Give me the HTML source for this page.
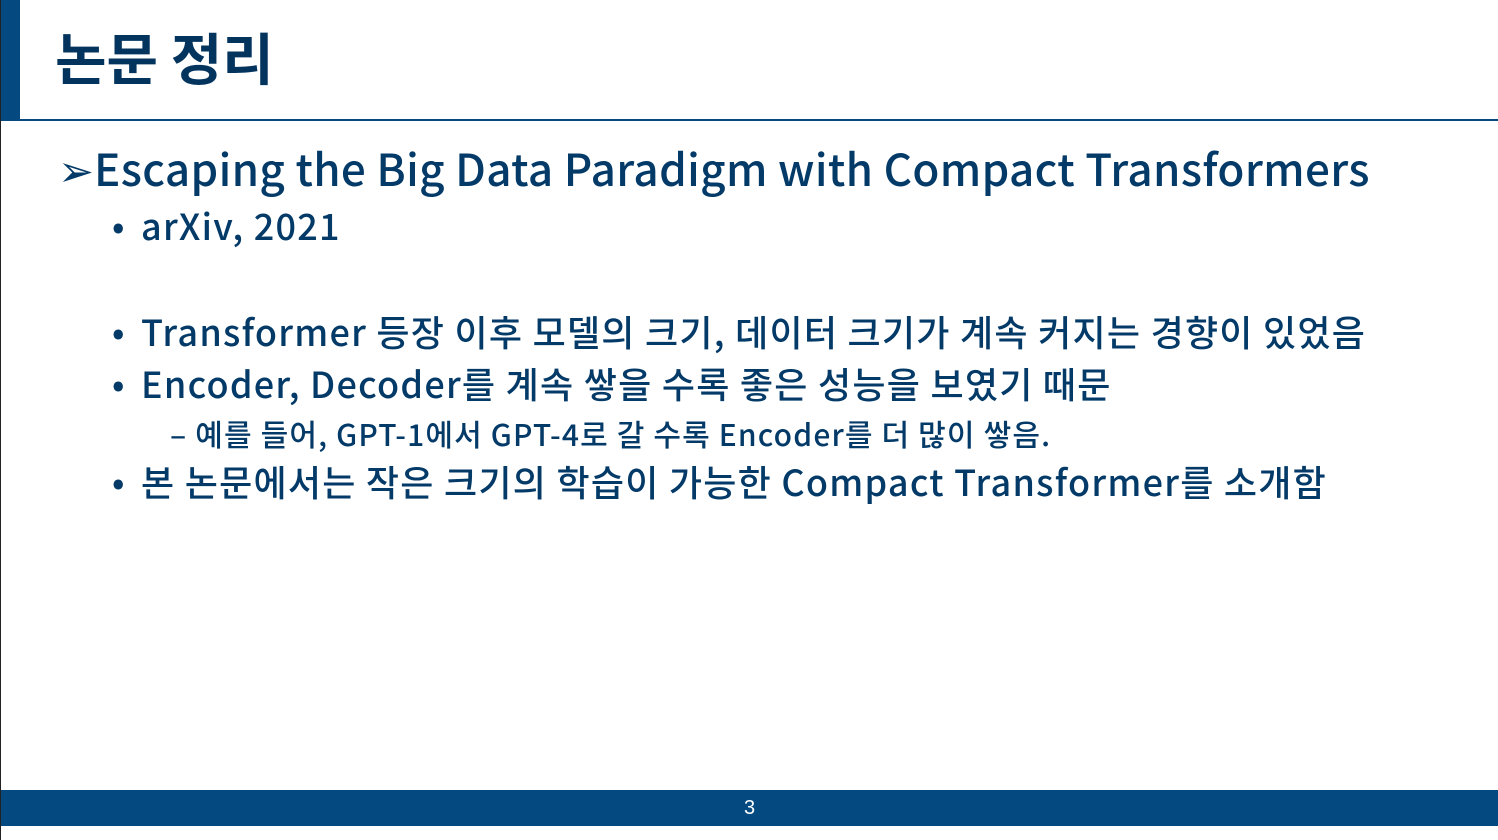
<!DOCTYPE html>
<html><head><meta charset="utf-8"><style>
html,body{margin:0;padding:0;}
body{width:1498px;height:840px;position:relative;background:#fff;overflow:hidden;font-family:"Noto Sans CJK KR",sans-serif;font-weight:500;color:#033a68;}
.edge{position:absolute;left:0;top:0;width:1px;height:840px;background:#222;}
.bar{position:absolute;left:1px;top:0;width:19px;height:120px;background:#044a80;}
.hl{position:absolute;left:1px;top:119px;width:1497px;height:2px;background:#044a80;}
.foot{position:absolute;left:1px;top:790px;width:1497px;height:36px;background:#044a80;color:#fff;font-size:20px;text-align:center;line-height:36px;font-family:"Liberation Sans",sans-serif;font-weight:normal;}
.t{position:absolute;white-space:nowrap;}
.b{position:absolute;left:112px;font-size:35px;}
.l{font-size:36px;letter-spacing:1.25px;left:141px;line-height:50px;}
h1{position:absolute;left:55px;top:22px;margin:0;font-size:56px;font-weight:bold;color:#03345e;line-height:70px;}
</style></head><body>
<div class="edge"></div><div class="bar"></div><div class="hl"></div>
<h1>논문 정리</h1>
<div class="t" style="left:58px;top:137px;font-size:43px;line-height:60px;">➢<span style="font-size:44px;letter-spacing:0.35px">Escaping the Big Data Paradigm with Compact Transformers</span></div>
<div class="t b" style="top:200px;line-height:50px">•</div><div class="t l" style="top:200px;">arXiv, 2021</div>
<div class="t b" style="top:306px;line-height:50px">•</div><div class="t l" style="top:306px;">Transformer 등장 이후 모델의 크기, 데이터 크기가 계속 커지는 경향이 있었음</div>
<div class="t b" style="top:358px;line-height:50px">•</div><div class="t l" style="top:358px;">Encoder, Decoder를 계속 쌓을 수록 좋은 성능을 보였기 때문</div>
<div class="t" style="left:170px;top:412px;font-size:30px;letter-spacing:1.15px;line-height:42px;">– 예를 들어, GPT-1에서 GPT-4로 갈 수록 Encoder를 더 많이 쌓음.</div>
<div class="t b" style="top:456px;line-height:50px">•</div><div class="t l" style="top:456px;">본 논문에서는 작은 크기의 학습이 가능한 Compact Transformer를 소개함</div>
<div class="foot">3</div>
</body></html>
